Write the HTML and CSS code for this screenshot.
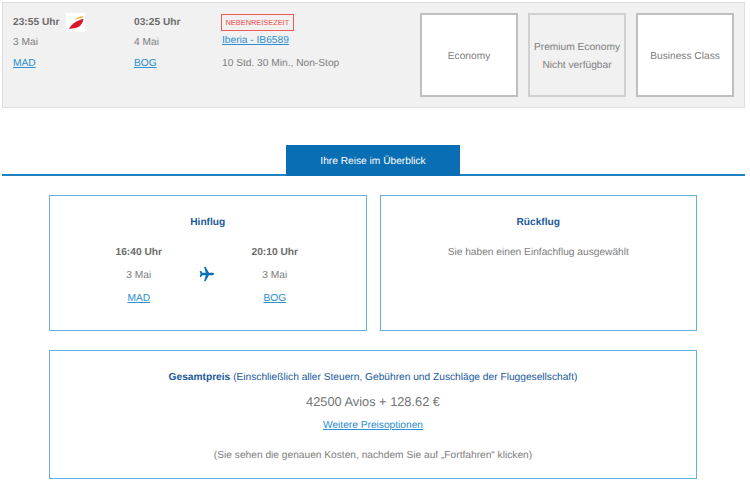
FILE: index.html
```html
<!DOCTYPE html>
<html lang="de">
<head>
<meta charset="utf-8">
<title>Ihre Reise im Überblick</title>
<link rel="stylesheet" href="styles.css">
</head>
<body>
<section class="flight">
  <div class="leg leg-dep">
    <div class="time-row">
      <b class="time">23:55 Uhr</b>
      <span class="logo">
        <svg width="19" height="19" viewBox="0 0 19 19"><path d="M3 16C5 11.500 10.500 7.500 17.500 5.800C17 10 14 14.500 9.500 15C7 15.200 5 15.500 3 16Z" fill="#d7192d"/><path d="M8.500 7.200C10.500 4.800 13.500 3.200 16.800 3.200C17.100 3.700 17 4.200 16.600 4.700C13.800 5 11 5.800 8.500 7.200Z" fill="#f4b223"/></svg>
      </span>
    </div>
    <div class="row">3 Mai</div>
    <div class="row"><a href="#">MAD</a></div>
  </div>
  <div class="leg leg-arr">
    <div class="time-row"><b class="time">03:25 Uhr</b></div>
    <div class="row">4 Mai</div>
    <div class="row"><a href="#">BOG</a></div>
  </div>
  <div class="leg-info">
    <span class="badge">NEBENREISEZEIT</span>
    <div class="carrier"><a href="#">Iberia - IB6589</a></div>
    <div class="duration">10 Std. 30 Min., Non-Stop</div>
  </div>
  <div class="fares">
    <div class="fare">Economy</div>
    <div class="fare fare-off"><span>Premium Economy</span><span>Nicht verfügbar</span></div>
    <div class="fare">Business Class</div>
  </div>
</section>

<nav class="tabs"><div class="tab">Ihre Reise im Überblick</div></nav>

<main class="summary">
  <div class="pair">
    <section class="card">
      <h2 class="card-title">Hinflug</h2>
      <div class="route">
        <div class="stop">
          <b class="time">16:40 Uhr</b>
          <div class="row">3 Mai</div>
          <div class="row"><a href="#">MAD</a></div>
        </div>
        <svg class="plane" width="16" height="16" viewBox="0 0 24 24"><path d="M22.500 12C22.500 10.900 21.400 10.300 20 10.300L15 10.300L9.700 1L7.500 1L10.200 10.300L5 10.300L3 7.500L1 7.500L2.300 12L1 16.500L3 16.500L5 13.700L10.200 13.700L7.500 23L9.700 23L15 13.700L20 13.700C21.400 13.700 22.500 13.100 22.500 12Z" fill="#0a6eb4"/></svg>
        <div class="stop">
          <b class="time">20:10 Uhr</b>
          <div class="row">3 Mai</div>
          <div class="row"><a href="#">BOG</a></div>
        </div>
      </div>
    </section>
    <section class="card">
      <h2 class="card-title">Rückflug</h2>
      <p class="oneway">Sie haben einen Einfachflug ausgewählt</p>
    </section>
  </div>
  <section class="card price">
    <p class="price-head"><b>Gesamtpreis</b> (Einschließlich aller Steuern, Gebühren und Zuschläge der Fluggesellschaft)</p>
    <p class="price-value">42500 Avios + 128.62 €</p>
    <p class="price-link"><a href="#">Weitere Preisoptionen</a></p>
    <p class="price-note">(Sie sehen die genauen Kosten, nachdem Sie auf „Fortfahren“ klicken)</p>
  </section>
</main>
</body>
</html>
```
FILE: styles.css
```css
* { box-sizing: border-box; }
html, body { margin: 0; padding: 0; background: #fff; }
body {
  width: 750px;
  height: 486px;
  overflow: hidden;
  padding: 2px 5px 0 2px;
  font: 10.200px/16px "Liberation Sans", Arial, sans-serif;
  text-rendering: geometricPrecision;
  color: #7d7d7d;
}
a { color: #2b8fd0; text-decoration: underline; }
b { font-weight: 700; }
p, h2 { margin: 0; }

.flight {
  display: flex;
  height: 106px;
  background: #f1f1f1;
  border: 1px solid #dedede;
  padding: 10px 10px 9px 10px;
}
.leg { display: flex; flex-direction: column; }
.leg-dep { width: 121px; }
.leg-arr { width: 87px; }
.leg-info { width: 199px; }
.time-row { display: flex; align-items: flex-start; gap: 7px; height: 18px; }
.time-row .time { margin-top: 2px; }
.time { color: #6b6b6b; }
.logo { width: 19px; height: 19px; background: #fff; display: block; flex: none; }
.logo svg { display: block; }
.row { margin-top: 4px; height: 16px; line-height: 16px; }
.leg .row + .row { margin-top: 5px; }
.badge {
  display: inline-block;
  margin-top: 1px;
  border: 1px solid #ef5a5a;
  color: #ee4f4f;
  font-size: 7.400px;
  line-height: 15px;
  height: 17px;
  padding: 0 3.500px;
  vertical-align: top;
}
.carrier { margin-top: 2px; height: 16px; padding-left: 1px; }
.duration { margin-top: 7px; padding-left: 1px; }

.fares { display: flex; gap: 10px; }
.fare {
  width: 98px;
  height: 84px;
  background: #fff;
  border: 2px solid #bfbfbf;
  padding-top: 4px;
  display: flex;
  flex-direction: column;
  align-items: center;
  justify-content: center;
  gap: 2px;
  line-height: 16px;
}
.fare-off { background: #f1f1f1; border-color: #d0d0d0; }

.tabs {
  margin-top: 37px;
  height: 31px;
  border-bottom: 2px solid #1f80c4;
  display: flex;
  justify-content: center;
  padding-right: 1px;
}
.tab {
  width: 174px;
  height: 31px;
  padding-top: 3px;
  background: #0a6eb4;
  color: #fff;
  text-align: center;
  line-height: 28px;
}

.summary { padding: 19px 48px 0 47px; }
.pair { display: flex; gap: 13px; }
.card {
  flex: 1;
  height: 136px;
  border: 1px solid #66afdf;
  background: #fff;
  padding-top: 19px;
  text-align: center;
}
.card-title { font-size: 10.200px; line-height: 16px; color: #1a5a9c; font-weight: 700; }
.route { display: flex; justify-content: center; align-items: center; margin-top: 14px; padding-right: 2px; }
.stop { width: 92px; }
.stop .row { margin-top: 7px; }
.plane { margin: 0 14px 5px; }
.oneway { margin-top: 14px; }

.price { height: 129px; margin-top: 19px; padding-top: 19px; }
.price-head { color: #1a5a9c; }
.price-value { margin-top: 7px; font-size: 12.800px; line-height: 18px; color: #737373; }
.price-link { margin-top: 7px; }
.price-note { margin-top: 14px; }
```
